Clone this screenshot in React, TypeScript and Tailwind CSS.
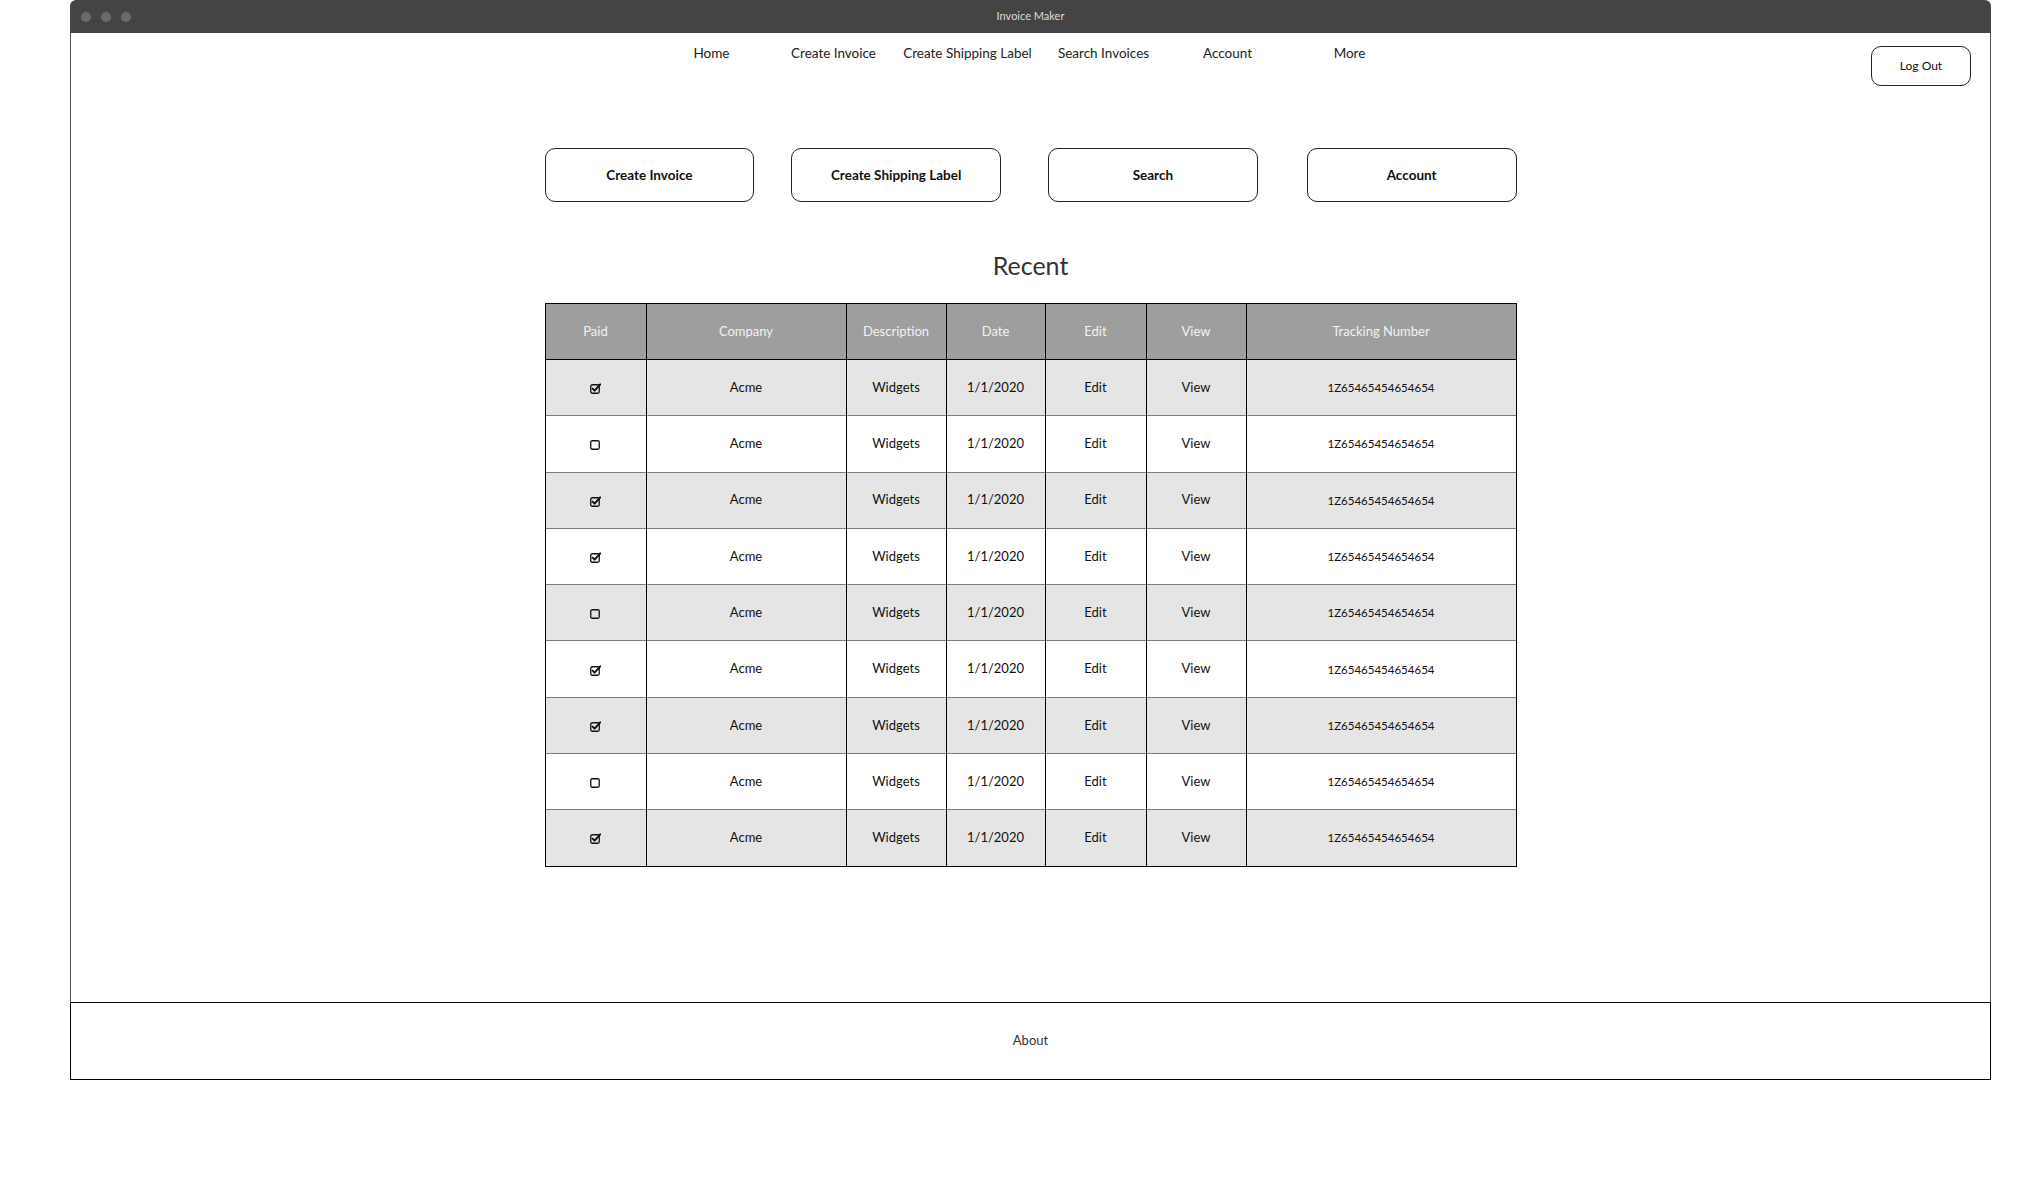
import { useState } from "react";

const navItems = [
  { label: "Home", w: "w-[122px]" },
  { label: "Create Invoice", w: "w-[122px]" },
  { label: "Create Shipping Label", w: "w-[146px]" },
  { label: "Search Invoices", w: "w-[126px]" },
  { label: "Account", w: "w-[122px]" },
  { label: "More", w: "w-[122px]" },
];

const columns = [
  { label: "Paid", w: "w-[101px]" },
  { label: "Company", w: "w-[200px]" },
  { label: "Description", w: "w-[100px]" },
  { label: "Date", w: "w-[99px]" },
  { label: "Edit", w: "w-[101px]" },
  { label: "View", w: "w-[100px]" },
  { label: "Tracking Number", w: "w-[270px]" },
];

const paidFlags = [true, false, true, true, false, true, true, false, true];

const CheckIcon = ({ checked }: { checked: boolean }) => (
  <svg width="11" height="11" viewBox="0 0 11 11" className="inline-block">
    <rect x="0.75" y="1.75" width="8.5" height="8.5" rx="1.5" fill="none" stroke="#111" strokeWidth="1.3" />
    {checked && (
      <path d="M2.6 5.6 L4.6 7.6 L10.2 1.4" fill="none" stroke="#111" strokeWidth="2" strokeLinecap="round" strokeLinejoin="round" />
    )}
  </svg>
);

export default function App() {
  const [rows] = useState(
    paidFlags.map((paid) => ({
      paid,
      company: "Acme",
      description: "Widgets",
      date: "1/1/2020",
      tracking: "1Z65465454654654",
    }))
  );

  return (
    <div className="min-h-[1190px] bg-white font-['Lato','Open_Sans',sans-serif] text-[#111]">
      <div className="ml-[70px] w-[1921px] flex flex-col">
        {/* Title bar */}
        <div className="h-[33px] bg-[#444444] rounded-t-[6px] flex items-center relative">
          <div className="flex gap-[10px] pl-[11px]">
            <span className="w-[10px] h-[10px] rounded-full bg-[#6b6b6b]" />
            <span className="w-[10px] h-[10px] rounded-full bg-[#6b6b6b]" />
            <span className="w-[10px] h-[10px] rounded-full bg-[#6b6b6b]" />
          </div>
          <div className="absolute inset-0 flex items-center justify-center text-[11px] text-[#dddddd]">
            Invoice Maker
          </div>
        </div>

        {/* Content */}
        <div className="h-[969px] border-x border-[#555555] flex flex-col">
          <div className="grid grid-cols-[1fr_auto_1fr] pt-[11px]">
            <div />
            <nav className="flex">
              {navItems.map((item) => (
                <span key={item.label} className={`${item.w} text-center text-[13.5px] leading-[18px] text-[#222]`}>
                  {item.label}
                </span>
              ))}
            </nav>
            <div className="flex justify-end pr-[19px] pt-[2px]">
              <button className="w-[100px] h-[40px] rounded-[10px] border border-[#222] text-[12px] text-[#111] bg-white">
                Log Out
              </button>
            </div>
          </div>

          <div className="mx-auto w-[972px] flex flex-col">
            <div className="flex mt-[62px]">
              <button className="w-[210px] h-[54px] rounded-[10px] border-[1.5px] border-[#222] bg-white text-[13.5px] font-bold">
                Create Invoice
              </button>
              <button className="ml-[37px] w-[210px] h-[54px] rounded-[10px] border-[1.5px] border-[#222] bg-white text-[13.5px] font-bold">
                Create Shipping Label
              </button>
              <button className="ml-[47px] w-[210px] h-[54px] rounded-[10px] border-[1.5px] border-[#222] bg-white text-[13.5px] font-bold">
                Search
              </button>
              <button className="ml-[49px] w-[210px] h-[54px] rounded-[10px] border-[1.5px] border-[#222] bg-white text-[13.5px] font-bold">
                Account
              </button>
            </div>

            <h2 className="mt-[47px] text-center text-[25px] leading-[32px] text-[#333]">Recent</h2>

            <table className="mt-[22px] border-collapse border border-black table-fixed w-[972px]">
              <thead>
                <tr className="h-[56px] bg-[#9e9e9e] border-b border-black">
                  {columns.map((c) => (
                    <th key={c.label} className={`${c.w} border-x border-black text-[13px] font-normal text-[#f2f2f2]`}>
                      {c.label}
                    </th>
                  ))}
                </tr>
              </thead>
              <tbody>
                {rows.map((r, i) => (
                  <tr
                    key={i}
                    className={`h-[56.3px] border-t border-[#7a7a7a] text-[13px] text-center ${
                      i % 2 === 0 ? "bg-[#e5e5e5]" : "bg-white"
                    }`}
                  >
                    <td className="border-x border-black">
                      <CheckIcon checked={r.paid} />
                    </td>
                    <td className="border-x border-black">{r.company}</td>
                    <td className="border-x border-black">{r.description}</td>
                    <td className="border-x border-black">{r.date}</td>
                    <td className="border-x border-black">Edit</td>
                    <td className="border-x border-black">View</td>
                    <td className="border-x border-black text-[11.5px]">{r.tracking}</td>
                  </tr>
                ))}
              </tbody>
            </table>
          </div>
        </div>

        {/* Footer */}
        <footer className="h-[78px] border border-black flex items-center justify-center text-[13px] text-[#333]">
          About
        </footer>
      </div>
    </div>
  );
}
